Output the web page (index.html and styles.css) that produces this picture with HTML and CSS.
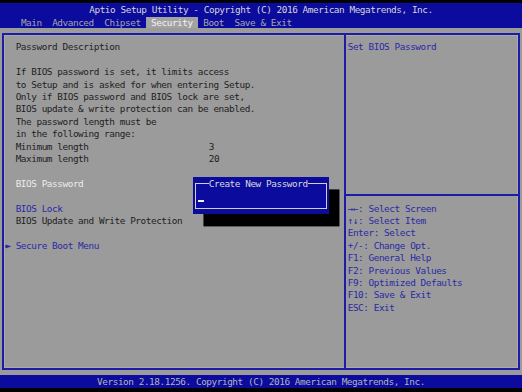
FILE: index.html
```
<!DOCTYPE html>
<html lang="en">
<head>
  <title>Aptio Setup Utility</title>
  <meta charset="UTF-8">
  <meta name="viewport" content="width=device-width, initial-scale=1">
  <link rel="stylesheet" href="styles.css">
</head>
<body>

  <div class="screen">

    <header class="head">
      <div class="row title">Aptio Setup Utility - Copyright (C) 2016 American Megatrends, Inc.</div>
      <nav class="row tabs">
        <span class="tab">Main</span>
        <span class="tab">Advanced</span>
        <span class="tab">Chipset</span>
        <span class="tab active">Security</span>
        <span class="tab">Boot</span>
        <span class="tab">Save &amp; Exit</span>
      </nav>
    </header>

    <main class="body">
      <div class="frame">

        <section class="left">
          <div class="row">Password Description</div>
          <div class="row gap">If BIOS password is set, it limits access</div>
          <div class="row">to Setup and is asked for when entering Setup.</div>
          <div class="row">Only if BIOS password and BIOS lock are set,</div>
          <div class="row">BIOS update &amp; write protection can be enabled.</div>
          <div class="row">The password length must be</div>
          <div class="row">in the following range:</div>
          <div class="row field"><span class="label">Minimum length</span><span>3</span></div>
          <div class="row field"><span class="label">Maximum length</span><span>20</span></div>

          <div class="row gap selected">BIOS Password</div>
          <div class="row gap link">BIOS Lock</div>
          <div class="row">BIOS Update and Write Protection</div>
          <div class="row gap link submenu"><span class="arrow">&#9658;</span>Secure Boot Menu</div>
        </section>

        <aside class="right">
          <div class="help-top">
            <div class="row">Set BIOS Password</div>
          </div>
          <div class="help-keys">
            <div class="row">&rarr;&larr;: Select Screen</div>
            <div class="row">&uarr;&darr;: Select Item</div>
            <div class="row">Enter: Select</div>
            <div class="row">+/-: Change Opt.</div>
            <div class="row">F1: General Help</div>
            <div class="row">F2: Previous Values</div>
            <div class="row">F9: Optimized Defaults</div>
            <div class="row">F10: Save &amp; Exit</div>
            <div class="row">ESC: Exit</div>
          </div>
        </aside>

      </div>

      <div class="popup">
        <fieldset class="popup-box">
          <legend>Create New Password</legend>
          <div class="input"><span class="cursor"></span></div>
        </fieldset>
      </div>
    </main>

    <footer class="row foot">Version 2.18.1256. Copyright (C) 2016 American Megatrends, Inc.</footer>

  </div>

</body>
</html>
```

FILE: styles.css
```
* {
  margin: 0;
  box-sizing: border-box;
}

/* one text cell of the setup screen is 5.22px wide, 12.4px high */
:root {
  --cw: 5.22px;
  --rh: 12.4px;
}

body {
  background-color: #000;
  font-family: "DejaVu Sans Mono", "Liberation Mono", monospace;
  font-size: 9.4px;
  letter-spacing: -0.44px;
  line-height: var(--rh);
  color: #1e1e1e;
}

.screen {
  width: 522px;
  height: 392px;
  padding-top: 3.3px;
}

.row {
  height: var(--rh);
  padding-top: 1px;
  white-space: pre;
}

.gap {
  margin-top: var(--rh);
}

/* header */
.head {
  background-color: #0b0b9e;
  color: #d6d6d6;
}

.title {
  text-align: center;
}

.tabs {
  display: flex;
  padding-left: calc(var(--cw) * 3);
  color: #a6a6a6;
}

.tab {
  padding: 0 var(--cw);
}

.tab.active {
  background-color: #a2a2a2;
  color: #f2f2f2;
}

/* main area */
.body {
  position: relative;
  height: 347.2px;
  background-color: #9b9b9b;
  padding-top: 5.2px;
}

.frame {
  display: flex;
  height: 336.8px;
  margin: 0 1.6px;
  border: 2px solid #1c1ca6;
  box-shadow: inset 0 0 0 1px #ababab;
}

.left {
  width: 342.5px;
  border-right: 2px solid #1c1ca6;
  padding: 5.2px 0 0 calc(1.62px + var(--cw) * 2);
}

.field {
  display: flex;
}

.field .label {
  width: calc(var(--cw) * 37);
}

.selected {
  color: #ececec;
}

.link {
  color: #2a2aa6;
}

.submenu .arrow {
  display: inline-block;
  width: calc(var(--cw) * 2);
  margin-left: calc(var(--cw) * -2);
  font-size: 10px;
  letter-spacing: 0;
}

.right {
  flex: 1;
  color: #2a2aa6;
}

.help-top {
  height: 161.2px;
  padding: 5.2px 0 0 1.6px;
  border-bottom: 2px solid #1c1ca6;
}

.help-keys {
  padding: 5.2px 0 0 1.6px;
}

/* password dialog */
.popup {
  position: absolute;
  left: 193.1px;
  top: 148.8px;
  width: 135.7px;
  height: 37.2px;
  padding: 0 2px 0 2.1px;
  background-color: #0b0b9e;
  color: #d8d8d8;
  box-shadow: 10.44px 12.4px 0 #000;
}

.popup-box {
  margin: 0;
  min-width: 0;
  padding: 0 0 0 2.1px;
  border: 1px solid #cfcfcf;
}

.popup-box legend {
  padding: 1px 0 0;
  margin-left: 10.5px;
  line-height: var(--rh);
}

.input {
  height: 18.1px;
  padding-top: 9.8px;
}

.cursor {
  display: block;
  width: var(--cw);
  height: 2px;
  background-color: #eeeeee;
}

/* footer */
.foot {
  background-color: #0b0b9e;
  color: #b4b4b4;
  text-align: center;
}
```
